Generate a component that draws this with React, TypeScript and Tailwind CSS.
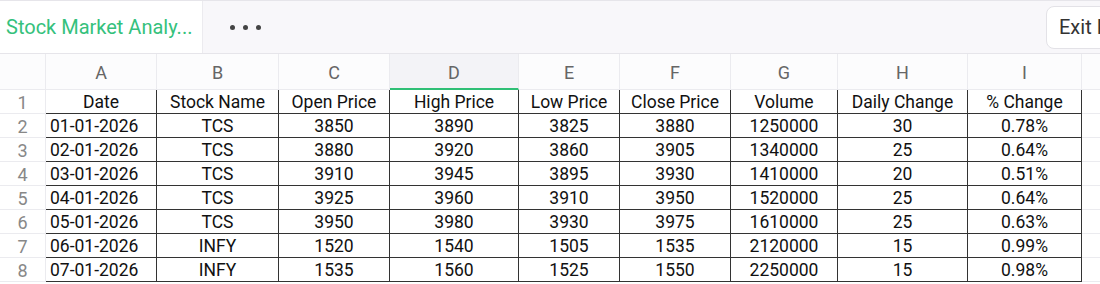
import React from 'react';

const columns = ['A', 'B', 'C', 'D', 'E', 'F', 'G', 'H', 'I'];

const rows: string[][] = [
  ['Date', 'Stock Name', 'Open Price', 'High Price', 'Low Price', 'Close Price', 'Volume', 'Daily Change', '% Change'],
  ['01-01-2026', 'TCS', '3850', '3890', '3825', '3880', '1250000', '30', '0.78%'],
  ['02-01-2026', 'TCS', '3880', '3920', '3860', '3905', '1340000', '25', '0.64%'],
  ['03-01-2026', 'TCS', '3910', '3945', '3895', '3930', '1410000', '20', '0.51%'],
  ['04-01-2026', 'TCS', '3925', '3960', '3910', '3950', '1520000', '25', '0.64%'],
  ['05-01-2026', 'TCS', '3950', '3980', '3930', '3975', '1610000', '25', '0.63%'],
  ['06-01-2026', 'INFY', '1520', '1540', '1505', '1535', '2120000', '15', '0.99%'],
  ['07-01-2026', 'INFY', '1535', '1560', '1525', '1550', '2250000', '15', '0.98%'],
];

const gridCols = 'grid grid-cols-[46px_111px_122px_111px_129px_101px_111px_107px_130px_114px_1fr]';

export default function App() {
  return (
    <div className="w-[1100px] h-[284px] overflow-hidden bg-white font-['Roboto',sans-serif]">
      {/* top bar */}
      <div className="flex h-[54px] items-stretch overflow-hidden border-t border-b border-[#e6e5ea] bg-[#f8f7fa]">
        <div className="flex w-[203px] shrink-0 items-center border-r border-[#ecebef] bg-white pl-[6px] text-[20px] text-[#35c17c]">
          Stock Market Analy...
        </div>
        <div className="flex w-[843px] shrink-0 items-center gap-[8px] pl-[27px]">
          <span className="h-[5px] w-[5px] rounded-full bg-[#444]" />
          <span className="h-[5px] w-[5px] rounded-full bg-[#444]" />
          <span className="h-[5px] w-[5px] rounded-full bg-[#444]" />
        </div>
        <div className="flex shrink-0 items-center">
          <div className="flex h-[43px] items-center whitespace-nowrap rounded-[8px] border border-[#e3e2e7] bg-white pl-[12px] pr-[16px] text-[20px] text-[#333]">
            Exit Preview
          </div>
        </div>
      </div>

      {/* column letters */}
      <div className={`${gridCols} h-[36px] bg-[#fcfcfd] text-[18px] text-[#666]`}>
        <div className="border-r border-b border-[#ebebef]" />
        {columns.map((c) => (
          <div
            key={c}
            className={
              c === 'D'
                ? 'flex items-center justify-center border-r border-b-2 border-r-[#ebebef] border-b-[#2fbf76] bg-[#f3f3f7] pt-[2px]'
                : 'flex items-center justify-center border-r border-b border-[#ebebef] pt-[2px]'
            }
          >
            {c}
          </div>
        ))}
        <div className="border-b border-[#ebebef]" />
      </div>

      {/* rows */}
      {rows.map((row, i) => (
        <div key={i} className={`${gridCols} h-[24px] text-[17.5px] leading-none text-[#111]`}>
          <div className="flex items-center justify-center border-r border-b border-[#ebebef] pt-[2px] text-[18px] text-[#888]">
            {i + 1}
          </div>
          {row.map((cell, j) => (
            <div
              key={j}
              className={`flex items-center whitespace-nowrap border-r border-b border-[#333] pt-[3px] ${
                j === 0 && i > 0 ? 'justify-start pl-[4px]' : 'justify-center'
              }`}
            >
              {cell}
            </div>
          ))}
          <div className="border-b border-[#ebebef]" />
        </div>
      ))}
    </div>
  );
}
